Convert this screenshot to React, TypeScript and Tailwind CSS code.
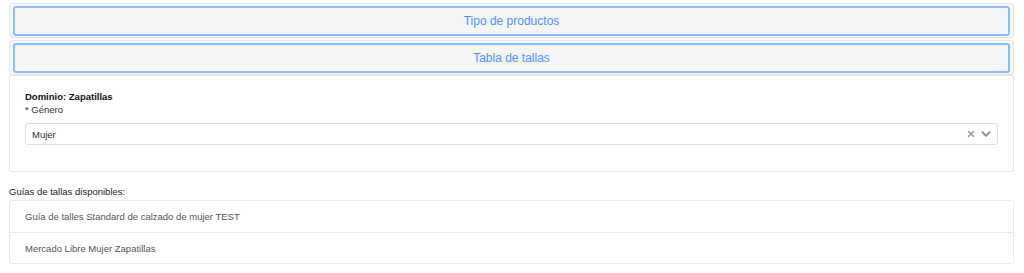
import { ChevronDown, X } from "lucide-react"

const guides = ["Guía de talles Standard de calzado de mujer TEST", "Mercado Libre Mujer Zapatillas"]

function Header({ label }: { label: string }) {
  return (
    <div className="rounded-[3px] border border-[#e6e6e6] bg-[#f7f7f7] px-[3px] pt-[2px] pb-[1px]">
      <button
        type="button"
        className="flex h-[30px] w-full items-center justify-center rounded-[3px] border-2 border-[#8bbcff] bg-[#f5f5f5] text-[12px] text-[#4d94ff]"
      >
        {label}
      </button>
    </div>
  )
}

export default function App() {
  return (
    <div className="bg-white pl-[9px] pr-[10px] pt-[3px] font-['Liberation_Sans',Arial,sans-serif] text-[9.5px] leading-[13px] text-[#333]">
      <div className="flex flex-col gap-[2px]">
        <Header label="Tipo de productos" />
        <Header label="Tabla de tallas" />
      </div>
      <div className="h-[97px] rounded-b-[3px] border border-[#e8e8e8] px-[15px] pt-[14px]">
        <div className="font-bold text-[#111]">Dominio: Zapatillas</div>
        <div className="text-[#333]">* Género</div>
        <div className="mt-[7px] flex h-[22px] items-center rounded-[3px] border border-[#e0e0e0] pl-[6px] pr-[4px]">
          <span className="flex-1 text-[#333]">Mujer</span>
          <X className="h-[10px] w-[10px] text-[#999]" strokeWidth={3.5} />
          <ChevronDown className="ml-[3px] h-[14px] w-[14px] text-[#999]" strokeWidth={3.5} />
        </div>
      </div>
      <div className="mt-[13px] text-[#222]">Guías de tallas disponibles:</div>
      <div className="mt-[2px] rounded-[3px] border border-[#eaeaea]">
        {guides.map((g, i) => (
          <div
            key={g}
            className={`flex h-[31px] items-center px-[15px] text-[#555] ${i > 0 ? "border-t border-[#eaeaea]" : ""}`}
          >
            {g}
          </div>
        ))}
      </div>
    </div>
  )
}
